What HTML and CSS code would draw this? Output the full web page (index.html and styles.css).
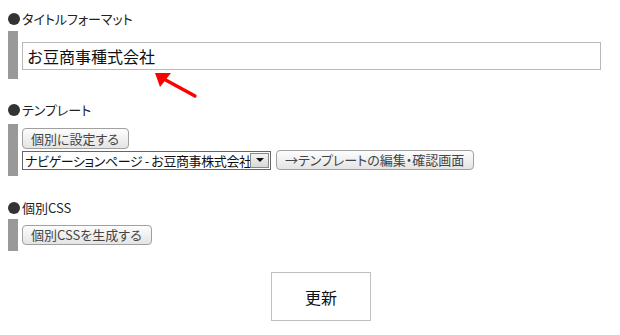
FILE: index.html
```html
<!DOCTYPE html>
<html lang="ja">
  <head>
    <meta charset="utf-8" />
    <title>ページ設定</title>
    <link rel="stylesheet" href="styles.css">
  </head>
  <body>
    <div class="page">
      <!-- タイトル -->
      <h2 class="heading heading-title">タイトルフォーマット</h2>
      <div class="bar bar-title">
        <input class="title-input" type="text" value="お豆商事種式会社" />
        <svg class="pointer" width="50" height="32" viewBox="0 0 50 32">
          <line x1="45" y1="28" x2="12" y2="10" stroke="#f00" stroke-width="3.4" stroke-linecap="round" />
          <polygon points="5,5 21,5 10,19" fill="#f00" />
        </svg>
      </div>

      <!-- テンプレート -->
      <h2 class="heading heading-template">テンプレート</h2>
      <div class="bar bar-template">
        <div class="row">
          <button class="btn" type="button">個別に設定する</button>
        </div>
        <div class="row row-select">
          <span class="select">
            <select>
              <option>ナビゲーションページ - お豆商事株式会社</option>
            </select>
            <span class="select-arrow"></span>
          </span>
          <button class="btn" type="button">→テンプレートの編集・確認画面</button>
        </div>
      </div>

      <!-- CSS -->
      <h2 class="heading heading-css">個別CSS</h2>
      <div class="bar bar-css">
        <button class="btn" type="button">個別CSSを生成する</button>
      </div>

      <div class="actions">
        <button class="update" type="submit">更新</button>
      </div>
    </div>
  </body>
</html>
```

FILE: styles.css
```css
body {
  margin: 0;
  background: #fff;
  color: #222;
  font-family: "Noto Sans CJK JP", sans-serif;
  font-size: 13px;
  font-feature-settings: "palt";
}

.page {
  width: 620px;
  padding-top: 9px;
}

.heading {
  display: flex;
  align-items: center;
  height: 20px;
  margin: 0;
  padding-left: 8px;
  font-size: 13px;
  font-weight: normal;
  line-height: 20px;
  color: #222;
}

/* the dark dot in front of each heading */
.heading::before {
  content: "";
  width: 12px;
  height: 12px;
  margin-right: 2px;
  border-radius: 50%;
  background: #333;
}

.heading-template {
  margin-top: 21px;
}

.heading-css {
  margin-top: 22px;
}

.bar {
  margin-left: 8px;
  border-left: 10px solid #999;
  padding-left: 4px;
}

.bar-title {
  position: relative;
  margin-top: 2px;
  padding-top: 11px;
  padding-bottom: 9px;
}

.bar-template {
  margin-top: 4px;
  padding-top: 4px;
  padding-bottom: 6px;
}

.bar-css {
  margin-top: 1px;
  padding-top: 6px;
  padding-bottom: 6px;
}

.title-input {
  display: block;
  box-sizing: border-box;
  width: 579px;
  height: 28px;
  margin: 0;
  padding: 0 4px;
  border: 1px solid #b8b8b8;
  font-family: inherit;
  font-size: 16px;
  color: #111;
  outline: none;
}

.pointer {
  position: absolute;
  left: 132px;
  top: 37px;
}

.row {
  display: flex;
  align-items: center;
}

.row-select {
  margin-top: 1px;
}

.btn {
  height: 21px;
  margin: 0;
  padding: 0 9px 0 8px;
  border: 1px solid #a0a0a0;
  border-radius: 4px;
  background: linear-gradient(#fdfdfd, #e4e4e4);
  font-family: inherit;
  font-size: 13px;
  font-feature-settings: inherit;
  line-height: 19px;
  color: #444;
  cursor: pointer;
}

.row-select .btn,
.bar-css .btn {
  height: 20px;
  line-height: 18px;
}

.select {
  display: inline-flex;
  align-items: center;
  box-sizing: border-box;
  width: 249px;
  height: 19px;
  margin-right: 5px;
  border: 1px solid #666;
  background: #fff;
}

.select select {
  flex: 1;
  min-width: 0;
  height: 17px;
  margin: 0;
  padding: 0 0 0 2px;
  border: 0;
  background: transparent;
  font-family: inherit;
  font-size: 13px;
  font-feature-settings: inherit;
  letter-spacing: -0.4px;
  line-height: 17px;
  color: #111;
  appearance: none;
  outline: none;
}

.select-arrow {
  display: flex;
  align-items: center;
  justify-content: center;
  box-sizing: border-box;
  width: 19px;
  height: 15px;
  margin-right: 1px;
  border: 1px solid #888;
  background: linear-gradient(#f4f4f4, #d8d8d8);
}

.select-arrow::after {
  content: "";
  border-left: 4px solid transparent;
  border-right: 4px solid transparent;
  border-top: 4px solid #111;
}

.actions {
  padding-left: 22px;
  margin-top: 21px;
  text-align: center;
}

.update {
  width: 100px;
  height: 49px;
  border: 1px solid #c0c0c0;
  background: #fff;
  font-family: inherit;
  font-size: 16px;
  color: #111;
  cursor: pointer;
}
```
